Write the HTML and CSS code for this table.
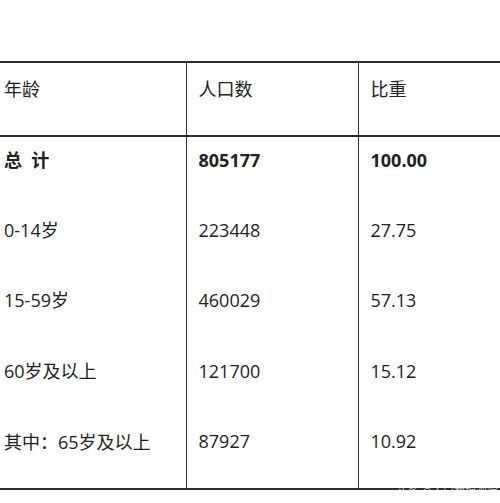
FILE: index.html
```html
<!DOCTYPE html>
<html lang="zh">
<head>
<meta charset="utf-8">
<link rel="stylesheet" href="styles.css">
</head>
<body>
<div class="wrap">
<table class="tbl">
  <colgroup><col class="w1"><col class="w2"><col></colgroup>
  <thead>
    <tr><th class="c1">年龄</th><th class="c2">人口数</th><th class="c3">比重</th></tr>
  </thead>
  <tbody>
    <tr class="total"><td class="c1">总&nbsp;&nbsp;计</td><td class="c2">805177</td><td class="c3">100.00</td></tr>
    <tr><td class="c1">0-14岁</td><td class="c2">223448</td><td class="c3">27.75</td></tr>
    <tr><td class="c1">15-59岁</td><td class="c2">460029</td><td class="c3">57.13</td></tr>
    <tr><td class="c1">60岁及以上</td><td class="c2">121700</td><td class="c3">15.12</td></tr>
    <tr><td class="c1">其中<span class="colon">：</span>65岁及以上</td><td class="c2">87927</td><td class="c3">10.92</td></tr>
  </tbody>
</table>
<span class="mark">头条 @人口数据观察</span>
</div>
</body>
</html>
```
FILE: styles.css
```css
html, body {
  margin: 0;
  padding: 0;
  background: #ffffff;
}
body {
  padding-top: 61px;
  font-family: "Open Sans", "Noto Sans CJK SC", sans-serif;
  font-size: 18px;
  color: #222222;
}
.wrap {
  position: relative;
  width: 500px;
}
.tbl {
  width: 500px;
  border-collapse: collapse;
  table-layout: fixed;
  border-top: 2px solid #2b2b2b;
  border-bottom: 2px solid #2b2b2b;
}
.w1 { width: 186px; }
.w2 { width: 172px; }
.tbl th, .tbl td {
  text-align: left;
  vertical-align: top;
  font-weight: 400;
  line-height: 24px;
  white-space: nowrap;
  padding: 0;
}
.tbl thead tr {
  height: 74px;
}
.tbl th {
  padding-top: 14px;
  border-bottom: 2px solid #2b2b2b;
}
.tbl tbody tr {
  height: 70.6px;
}
.tbl td {
  padding-top: 11px;
}
.c1 { padding-left: 4px !important; }
.c2 { padding-left: 12px !important; border-left: 1px solid #333; }
.c3 { padding-left: 12px !important; border-left: 1px solid #333; }
.total td { font-weight: 700; }
.colon {
  font-family: "Noto Sans CJK TC", sans-serif;
}
.mark {
  position: absolute;
  right: 2px;
  bottom: -8px;
  font-size: 11px;
  line-height: 14px;
  color: rgba(255,255,255,0.75);
  font-family: "Noto Sans CJK SC", sans-serif;
}
```
